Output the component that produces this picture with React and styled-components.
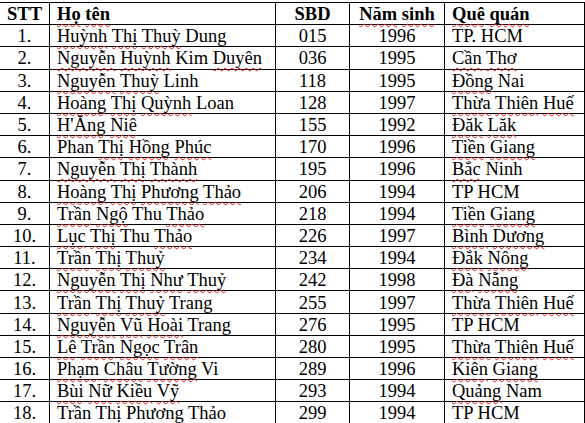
import React from 'react';
import styled, { createGlobalStyle } from 'styled-components';

const GlobalStyle = createGlobalStyle`
  html, body {
    margin: 0;
    padding: 0;
    background: #ffffff;
    overflow: hidden;
  }
`;

const Sheet = styled.div`
  width: 585px;
  height: 423px;
  overflow: hidden;
  background: #ffffff;
  padding-top: 2px;
  box-sizing: border-box;
`;

const Table = styled.div`
  display: grid;
  grid-template-columns: 50px 226px 74px 95px 140px;
  grid-auto-rows: 22.2px;
  border-top: 1px solid #000;
  font-family: "Liberation Serif", "Times New Roman", serif;
  font-size: 18.5px;
  color: #000;
`;

const Cell = styled.div`
  box-sizing: border-box;
  border-right: 1px solid #000;
  border-bottom: 1px solid #000;
  display: flex;
  align-items: center;
  justify-content: ${(p) => (p.$align === 'left' ? 'flex-start' : 'center')};
  padding-left: ${(p) => (p.$align === 'left' ? '7px' : '0')};
  padding-top: 1px;
  font-weight: ${(p) => (p.$head ? 700 : 400)};
  white-space: nowrap;
  line-height: 20px;
`;

const Text = styled.span`
  white-space: pre;
`;

const Word = styled.span`
  text-decoration: ${(p) => (p.$flag ? 'underline wavy #e0201b' : 'none')};
  text-decoration-thickness: 1px;
  text-underline-offset: 3px;
  text-decoration-skip-ink: none;
`;

const rows = [
  ['1.', 'Huỳnh Thị Thuỳ Dung', '015', '1996', 'TP. HCM'],
  ['2.', 'Nguyễn Huỳnh Kim Duyên', '036', '1995', 'Cần Thơ'],
  ['3.', 'Nguyễn Thuỳ Linh', '118', '1995', 'Đồng Nai'],
  ['4.', 'Hoàng Thị Quỳnh Loan', '128', '1997', 'Thừa Thiên Huế'],
  ['5.', "H'Ăng Niê", '155', '1992', 'Đăk Lăk'],
  ['6.', 'Phan Thị Hồng Phúc', '170', '1996', 'Tiền Giang'],
  ['7.', 'Nguyễn Thị Thành', '195', '1996', 'Bắc Ninh'],
  ['8.', 'Hoàng Thị Phương Thảo', '206', '1994', 'TP HCM'],
  ['9.', 'Trần Ngộ Thu Thảo', '218', '1994', 'Tiền Giang'],
  ['10.', 'Lục Thị Thu Thảo', '226', '1997', 'Bình Dương'],
  ['11.', 'Trần Thị Thuỷ', '234', '1994', 'Đắk Nông'],
  ['12.', 'Nguyễn Thị Như Thuỷ', '242', '1998', 'Đà Nẵng'],
  ['13.', 'Trần Thị Thuỷ Trang', '255', '1997', 'Thừa Thiên Huế'],
  ['14.', 'Nguyễn Vũ Hoài Trang', '276', '1995', 'TP HCM'],
  ['15.', 'Lê Trần Ngọc Trân', '280', '1995', 'Thừa Thiên Huế'],
  ['16.', 'Phạm Châu Tường Vi', '289', '1996', 'Kiên Giang'],
  ['17.', 'Bùi Nữ Kiều Vỹ', '293', '1994', 'Quảng Nam'],
  ['18.', 'Trần Thị Phương Thảo', '299', '1994', 'TP HCM'],
];

// words the spell checker flags even without diacritics
const extra = new Set(['sinh', 'Giang']);

const Flagged = ({ text }) => {
  const words = text.split(' ');
  return (
    <Text>
      {words.map((w, i) => (
        <React.Fragment key={i}>
          <Word $flag={/[^\x00-\x7F]/.test(w) || extra.has(w)}>{w}</Word>
          {i < words.length - 1 ? ' ' : ''}
        </React.Fragment>
      ))}
    </Text>
  );
};

const App = () => (
  <Sheet>
    <GlobalStyle />
    <Table>
      <Cell $head>STT</Cell>
      <Cell $head $align="left"><Flagged text="Họ tên" /></Cell>
      <Cell $head>SBD</Cell>
      <Cell $head><Flagged text="Năm sinh" /></Cell>
      <Cell $head $align="left"><Flagged text="Quê quán" /></Cell>
      {rows.map((r) => (
        <React.Fragment key={r[0]}>
          <Cell>{r[0]}</Cell>
          <Cell $align="left"><Flagged text={r[1]} /></Cell>
          <Cell>{r[2]}</Cell>
          <Cell>{r[3]}</Cell>
          <Cell $align="left"><Flagged text={r[4]} /></Cell>
        </React.Fragment>
      ))}
    </Table>
  </Sheet>
);

export default App;
